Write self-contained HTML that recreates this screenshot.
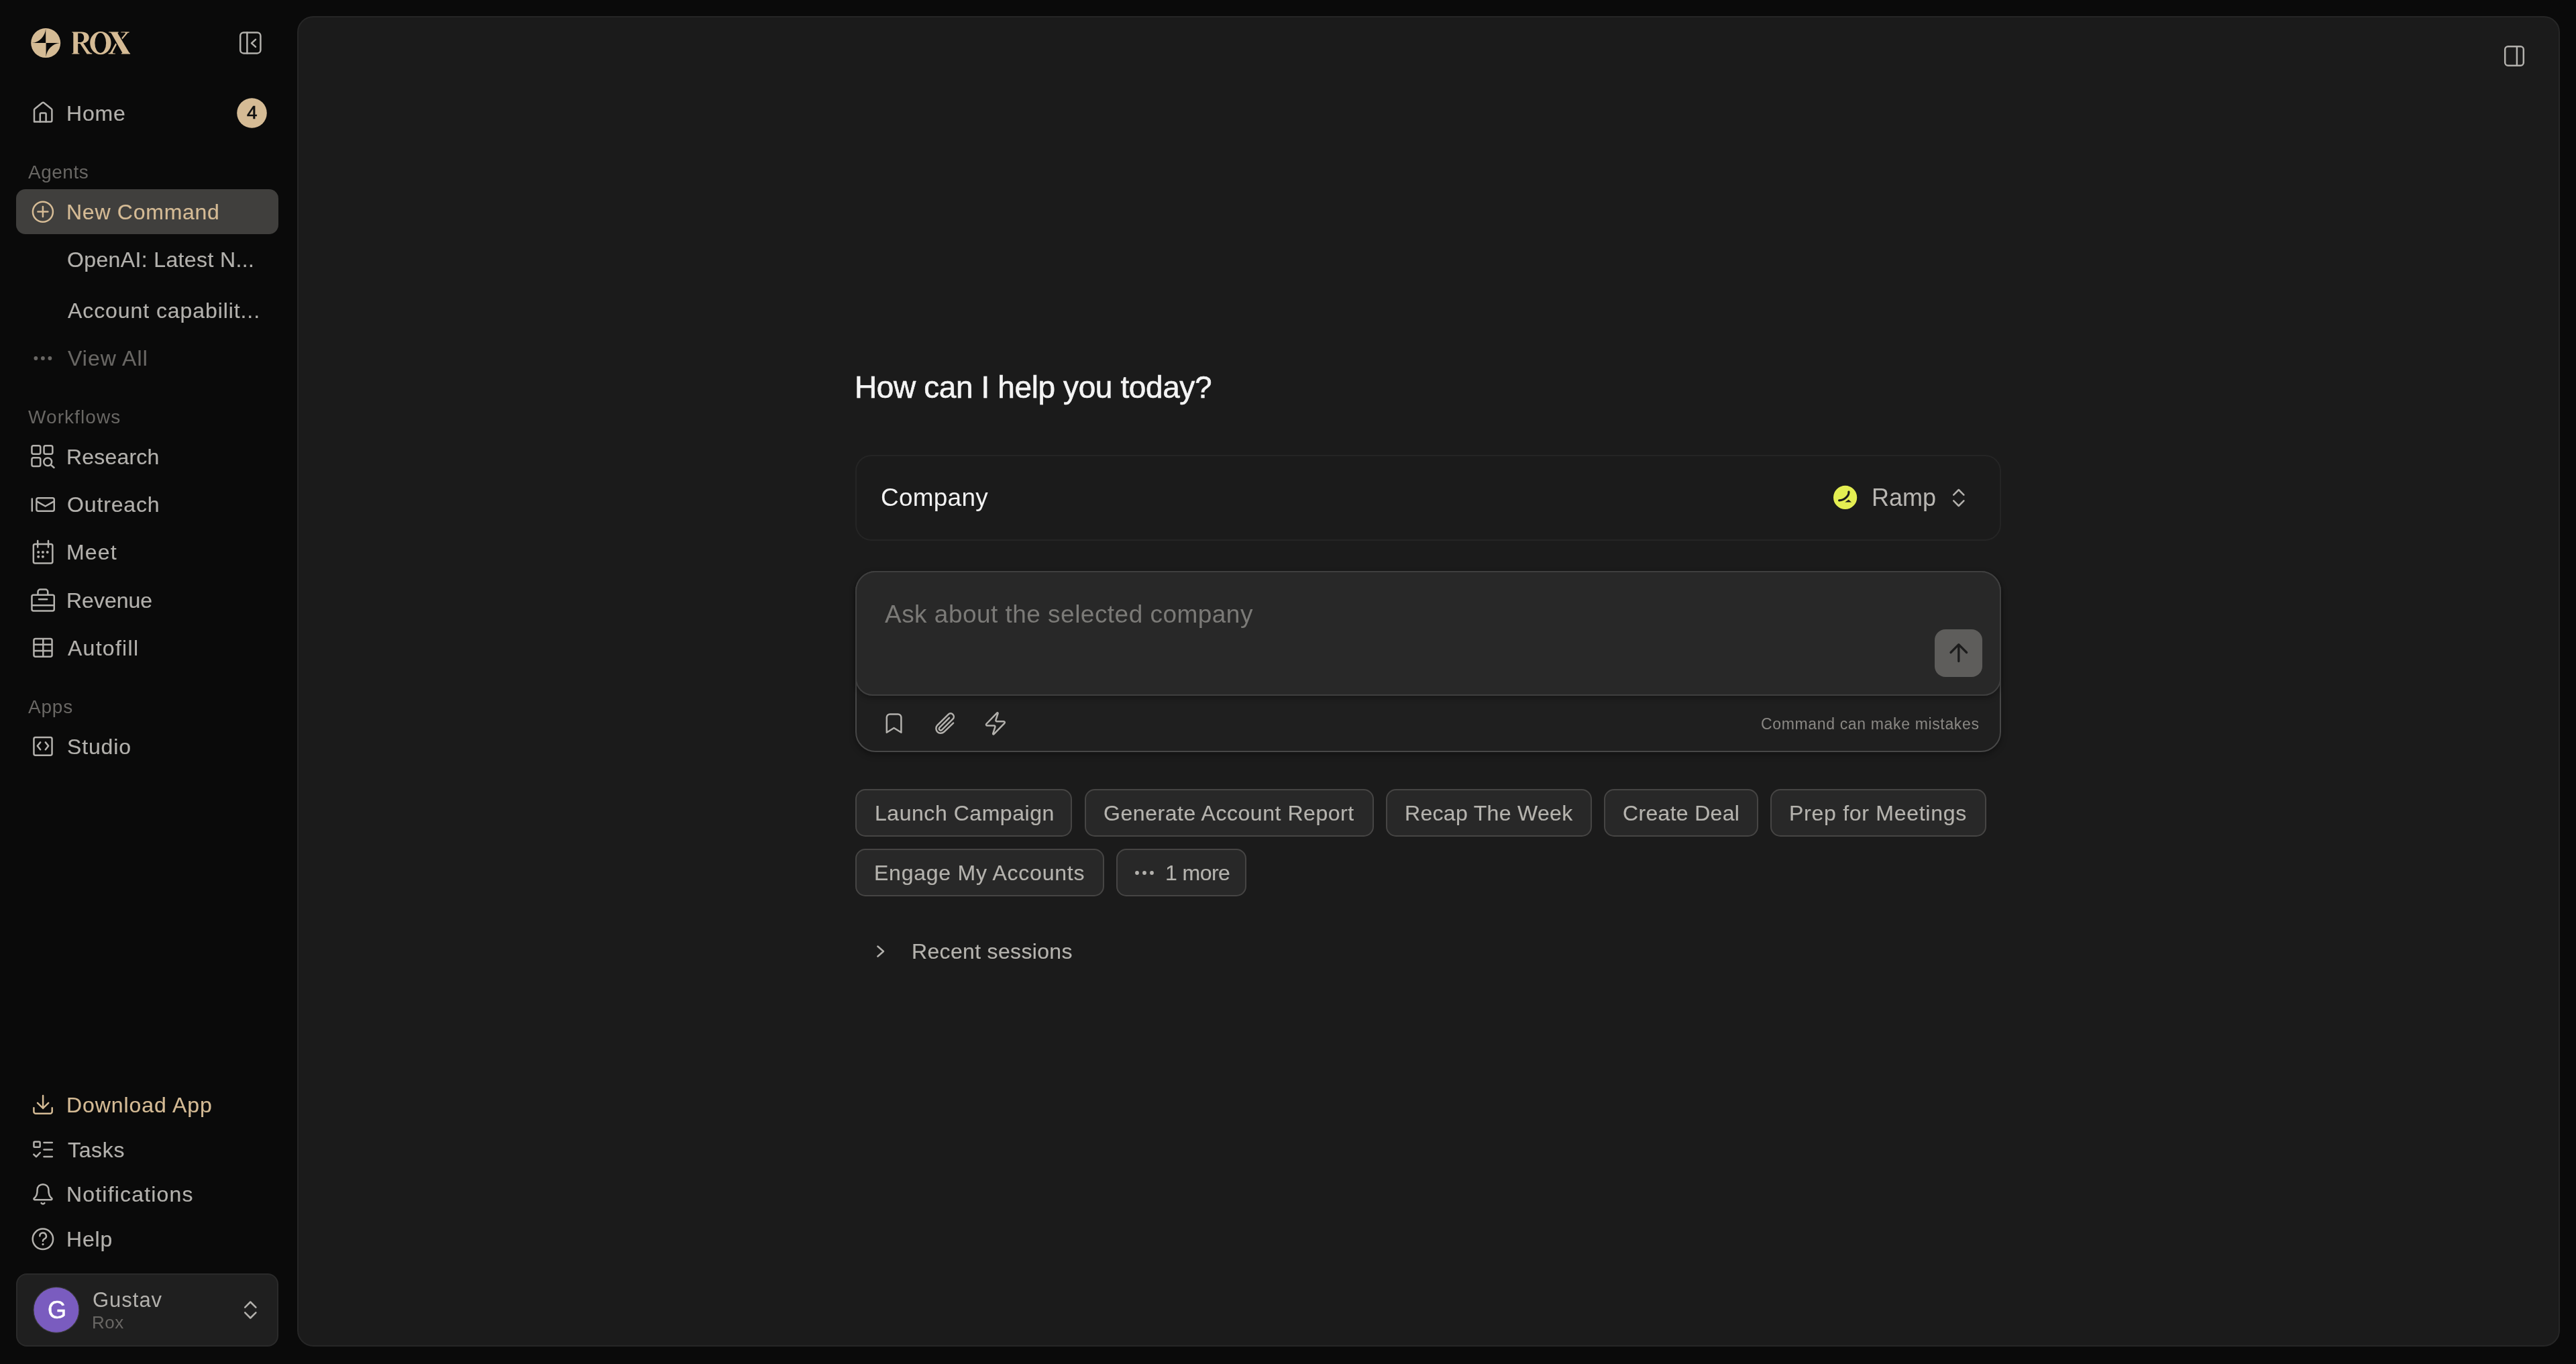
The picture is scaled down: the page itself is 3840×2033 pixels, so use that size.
<!DOCTYPE html>
<html><head><meta charset="utf-8">
<style>
html,body{margin:0;padding:0;}
body{width:3840px;height:2033px;overflow:hidden;background:#0a0a0a;position:relative;font-family:"Liberation Sans",sans-serif;}
.t{position:absolute;line-height:1;white-space:nowrap;font-family:"Liberation Sans",sans-serif;will-change:transform;}
.s{font-size:32px;color:#b3b1ad;-webkit-text-stroke:0.15px currentColor;}
.h{font-size:28px;color:#696764;}
.tan{color:#d5bb95;}
.box{position:absolute;box-sizing:border-box;}
svg{position:absolute;overflow:visible;}
.chip{border-radius:15px;background:#282828;border:2px solid #464544;}
.c{font-size:32px;color:#b5b3ae;-webkit-text-stroke:0.15px currentColor;}
</style></head>
<body>
<!-- SIDEBAR -->
<div class="box" style="left:24px;top:282px;width:391px;height:67px;border-radius:14px;background:#403f3d;"></div>
<div class="box" style="left:24px;top:1898px;width:391px;height:109px;border-radius:16px;background:#1f1f1f;border:2px solid #2a2a2a;"></div>

<svg style="left:0;top:0" width="440" height="2033" viewBox="0 0 440 2033">
  <!-- logo -->
  <circle cx="68.2" cy="64.1" r="22" fill="#d5bb95"/>
  <path d="M68.2 42.6 L68.2 64.1 L47.6 64.1 A23 23 0 0 0 68.2 42.6 Z" fill="#0a0a0a"/>
  <path d="M68.6 64.1 L89.2 64.1 A23 23 0 0 0 68.6 85 Z" fill="#0a0a0a"/>
  <g fill="none" stroke="#b3b1ad" stroke-width="2.5" stroke-linecap="round" stroke-linejoin="round">
    <!-- collapse -->
    <rect x="358.2" y="48.4" width="30.2" height="31" rx="5"/>
    <line x1="368.4" y1="48.4" x2="368.4" y2="79.4"/>
    <path d="M381 58.8 L375 64.3 L381 69.8"/>
    <!-- home -->
    <path d="M51 181.6 V163.8 a2 2 0 0 1 0.8-1.6 L62.9 153.3 a2 2 0 0 1 2.6 0 L76.6 162.2 a2 2 0 0 1 0.8 1.6 V179.6 a2 2 0 0 1-2 2 H53 a2 2 0 0 1-2-2z"/>
    <path d="M59.8 181.6 V170 a1.5 1.5 0 0 1 1.5-1.5 h5.8 a1.5 1.5 0 0 1 1.5 1.5 V181.6"/>
    <!-- research -->
    <rect x="47.45" y="664.15" width="12.8" height="12.7" rx="2.5"/>
    <rect x="65.55" y="664.15" width="12.8" height="12.7" rx="2.5"/>
    <rect x="47.45" y="682.25" width="12.8" height="12.7" rx="2.5"/>
    <circle cx="71.2" cy="688.4" r="5.9"/>
    <path d="M75.6 692.8 L80.5 697"/>
    <!-- outreach -->
    <rect x="54.45" y="742.25" width="26.3" height="19.5" rx="2.5"/>
    <path d="M55.8 747.8 L67.6 754.5 L79.4 747.8"/>
    <path d="M47.8 743.5 V761.5"/>
    <!-- calendar -->
    <rect x="49.85" y="811.05" width="28.5" height="28.5" rx="2.5"/>
    <path d="M56.2 806 V815.5 M72 806 V815.5"/>
    <!-- briefcase -->
    <rect x="47.45" y="886.85" width="33.3" height="23.7" rx="2.5"/>
    <path d="M56.5 886.5 V882.2 a3.6 3.6 0 0 1 3.6-3.6 h7.6 a3.6 3.6 0 0 1 3.6 3.6 V886.5"/>
    <path d="M58 893.2 H70.2 M48 902.2 H80"/>
    <!-- table -->
    <rect x="50.45" y="952.05" width="27.1" height="26.8" rx="2.5"/>
    <path d="M51 960.8 H77 M51 970 H77 M64.3 952.5 V978.5"/>
    <!-- studio -->
    <rect x="50.45" y="1099.05" width="27.1" height="26.8" rx="2.5"/>
    <path d="M60.2 1106.4 L55.8 1111.8 L60.2 1117.2 M67.8 1106.4 L72.2 1111.8 L67.8 1117.2"/>
    <!-- tasks -->
    <rect x="50.45" y="1701.85" width="9.2" height="8" rx="1.2"/>
    <path d="M65.5 1702.9 H77.8 M65.5 1713.4 H77.8 M65.5 1723.9 H77.8"/>
    <path d="M50.3 1720.6 L54 1724.2 L59.8 1718"/>
    <!-- bell -->
    <path d="M55.6 1773.8 C55.6 1768.4 59.4 1765.2 64 1765.2 C68.6 1765.2 72.4 1768.4 72.4 1773.8 C72.4 1778.6 73.2 1781.6 75 1783.8 L77.2 1786.2 a1.2 1.2 0 0 1-0.9 2 H51.7 a1.2 1.2 0 0 1-0.9-2 L53 1783.8 C54.8 1781.6 55.6 1778.6 55.6 1773.8 Z"/>
    <path d="M61.6 1793.2 Q64 1795.8 66.4 1793.2"/>
    <!-- help -->
    <circle cx="63.9" cy="1846.8" r="15.2"/>
    <path d="M59.3 1842.3 a4.8 4.8 0 1 1 6.8 4.3 c-1.4 0.7-2.2 1.6-2.2 3.1"/>
    <!-- user chevrons -->
    <path d="M365.2 1948.6 L373.3 1940.5 L381.4 1948.6 M365.2 1956.4 L373.3 1964.5 L381.4 1956.4"/>
  </g>
  <circle cx="64" cy="1854.6" r="1.6" fill="#b3b1ad"/>
  <g fill="#b3b1ad">
    <circle cx="57.2" cy="823.1" r="2"/><circle cx="63.9" cy="823.1" r="2"/><circle cx="70.7" cy="823.1" r="2"/>
    <circle cx="57.2" cy="829.8" r="2"/><circle cx="63.9" cy="829.8" r="2"/>
  </g>
  <!-- plus circle (tan) -->
  <g fill="none" stroke="#d5bb95" stroke-width="2.5" stroke-linecap="round">
    <circle cx="63.9" cy="315.7" r="15"/>
    <path d="M56.4 315.6 H71.4 M63.9 308.1 V323.1"/>
    <!-- download -->
    <path d="M64.1 1633 V1651.5 M56 1643.8 L64.1 1651.8 L72.2 1643.8"/>
    <path d="M50.4 1651.2 V1656.8 a3 3 0 0 0 3 3 H74.7 a3 3 0 0 0 3-3 V1651.2"/>
  </g>
  <g fill="#696764">
    <circle cx="53.4" cy="534" r="2.9"/><circle cx="63.9" cy="534" r="2.9"/><circle cx="74.4" cy="534" r="2.9"/>
  </g>
  <!-- badge -->
  <circle cx="375.5" cy="168.5" r="22.3" fill="#d5bb95"/>
  <!-- avatar -->
  <circle cx="83.9" cy="1952.4" r="34" fill="#7a5cbf" stroke="#3a3a3a" stroke-width="1.2"/>
</svg>
<svg style="left:0;top:0" width="440" height="100" viewBox="0 0 440 100">
  <g fill="#d5bb95" fill-rule="evenodd">
    <path d="M107.3 47.6 H121.5 C129.2 47.6 132.7 51.6 132.7 55.9 C132.7 60.4 129.3 63.6 124.2 64.3 L132.2 76.3 C133.6 78.4 135 79.3 137.3 79.4 V80.4 H129.6 L119.4 64.9 H116.2 V77.9 C116.2 79 116.9 79.4 118.4 79.4 V80.4 H107.2 V79.4 C108.7 79.4 109.3 79 109.3 77.9 V50.2 C109.3 49.1 108.7 48.6 107.3 48.6 Z M116.2 49.6 V63.1 H119.3 C123.1 63.1 125.2 60.4 125.2 56.3 C125.2 52.3 123.1 49.6 119.3 49.6 Z"/>
    <path d="M149.9 47 A15.7 17.1 0 1 1 149.9 81.2 A15.7 17.1 0 1 1 149.9 47 Z M149.75 49.1 A8.4 14.9 0 1 0 149.75 78.9 A8.4 14.9 0 1 0 149.75 49.1 Z"/>
    <path d="M162.1 47.6 H176.6 V48.6 C175.6 48.7 175.2 49.2 175.8 50.2 L192 77.6 C192.8 78.9 193.4 79.3 194.1 79.4 V80.4 H180.8 V79.4 C182.2 79.3 182.6 78.9 182 77.9 L166.4 50.4 C165.6 49.1 164.6 48.6 162.1 48.6 Z"/>
    <path d="M180.4 47.6 H192.7 V48.6 C191.2 48.7 190.2 49.3 189.2 50.5 L182.5 58.6 L181.2 56.7 L186.6 50.2 C187.3 49.2 187 48.7 185.6 48.6 H180.4 Z"/>
    <path d="M173.9 66.5 L168.3 77.2 C167.6 78.7 168.1 79.3 169.6 79.4 H171.9 V80.4 H161.5 V79.4 C162.9 79.3 164 78.7 165.1 77.3 L172.4 64.2 Z"/>
  </g>
</svg>

<div class="t" style="left:368px;top:154px;font-size:28px;color:#111;-webkit-text-stroke:0.6px #111;">4</div>

<div class="t s" style="left:99px;top:153px;letter-spacing:0.83px;">Home</div>
<div class="t h" style="left:42px;top:243px;letter-spacing:0.50px;">Agents</div>
<div class="t s tan" style="left:99px;top:300px;letter-spacing:0.74px;">New Command</div>
<div class="t s" style="left:100px;top:371px;letter-spacing:0.37px;">OpenAI: Latest N...</div>
<div class="t s" style="left:101px;top:447px;letter-spacing:0.92px;">Account capabilit...</div>
<div class="t s" style="left:101px;top:518px;color:#696764;letter-spacing:1.04px;">View All</div>
<div class="t h" style="left:42px;top:608px;letter-spacing:1.07px;">Workflows</div>
<div class="t s" style="left:99px;top:665px;letter-spacing:0.20px;">Research</div>
<div class="t s" style="left:100px;top:736px;letter-spacing:0.86px;">Outreach</div>
<div class="t s" style="left:99px;top:807px;letter-spacing:1.13px;">Meet</div>
<div class="t s" style="left:99px;top:879px;">Revenue</div>
<div class="t s" style="left:101px;top:950px;letter-spacing:1.28px;">Autofill</div>
<div class="t h" style="left:42px;top:1040px;letter-spacing:0.77px;">Apps</div>
<div class="t s" style="left:99.5px;top:1097px;letter-spacing:0.84px;">Studio</div>
<div class="t s tan" style="left:99px;top:1631px;letter-spacing:0.94px;">Download App</div>
<div class="t s" style="left:101px;top:1698px;letter-spacing:0.65px;">Tasks</div>
<div class="t s" style="left:99px;top:1764px;letter-spacing:1.18px;">Notifications</div>
<div class="t s" style="left:99px;top:1831px;letter-spacing:0.83px;">Help</div>
<div class="t" style="left:71px;top:1935px;font-size:36px;color:#fff;-webkit-text-stroke:0.5px #fff;">G</div>
<div class="t" style="left:138px;top:1922px;font-size:31px;color:#b3b1ad;letter-spacing:0.98px;">Gustav</div>
<div class="t" style="left:137px;top:1958px;font-size:26px;color:#696764;letter-spacing:0.45px;">Rox</div>

<!-- MAIN -->
<div class="box" id="panel" style="left:443px;top:24px;width:3373px;height:1983px;border-radius:24px;background:#1b1b1b;border:2px solid #262626;"></div>


<svg style="left:0;top:0" width="3840" height="2033" viewBox="0 0 3840 2033">
  <g fill="none" stroke="#b3b1ad" stroke-width="2.5" stroke-linecap="round" stroke-linejoin="round">
    <!-- right panel toggle -->
    <rect x="3734.2" y="69.2" width="27.6" height="28.6" rx="4.5"/>
    <line x1="3751.9" y1="69.2" x2="3751.9" y2="97.8"/>
  </g>
</svg>

<div class="t" style="left:1274px;top:554px;font-size:46px;color:#f4f4f4;-webkit-text-stroke:0.6px #f4f4f4;letter-spacing:-0.40px;">How can I help you today?</div>

<div class="box" style="left:1275px;top:678px;width:1708px;height:128px;border-radius:24px;border:2px solid #252525;"></div>
<div class="t" style="left:1313px;top:723px;font-size:37px;color:#f2f2f2;letter-spacing:0.23px;">Company</div>
<svg style="left:0;top:0" width="3840" height="2033" viewBox="0 0 3840 2033">
  <circle cx="2750.6" cy="741.4" r="17.6" fill="#e4ee52"/>
  <path d="M2755.9 733.2 C2756.5 738.5 2750 745.5 2741.6 745.8" fill="none" stroke="#1b1b1b" stroke-width="3.2" stroke-linecap="round"/>
  <path d="M2750.2 748.6 L2755.7 744.8 L2760 748.6 Z" fill="#1b1b1b"/>
  <path d="M2912.2 737.6 L2919.8 730 L2927.4 737.6 M2912.2 746.4 L2919.8 754 L2927.4 746.4" fill="none" stroke="#b3b1ad" stroke-width="2.5" stroke-linecap="round" stroke-linejoin="round"/>
</svg>
<div class="t" style="left:2790px;top:724px;font-size:36px;color:#b8b6b2;letter-spacing:0.00px;">Ramp</div>

<!-- input -->
<div class="box" style="left:1275px;top:851px;width:1708px;height:270px;border-radius:30px;background:#1f1f1f;border:2px solid #474747;box-shadow:0 4px 10px rgba(0,0,0,0.35);"></div>
<div class="box" style="left:1275px;top:851px;width:1708px;height:186px;border-radius:30px 30px 26px 26px;background:#282828;border:2px solid #3f3f3f;box-shadow:0 4px 8px rgba(0,0,0,0.3);"></div>
<div class="t" style="left:1319px;top:897px;font-size:37px;color:#7b7a77;letter-spacing:0.47px;">Ask about the selected company</div>
<div class="box" style="left:2884px;top:938px;width:71px;height:71px;border-radius:16px;background:#5e5d5b;"></div>
<svg style="left:0;top:0" width="3840" height="2033" viewBox="0 0 3840 2033">
  <path d="M2919.8 961 V985.5 M2908 972.5 L2919.8 960.7 L2931.6 972.5" fill="none" stroke="#1c1c1c" stroke-width="3.3" stroke-linecap="round" stroke-linejoin="round"/>
  <g fill="none" stroke="#b3b1ad" stroke-width="2.5" stroke-linecap="round" stroke-linejoin="round">
    <path d="M1321.8 1091.8 V1069.2 a4.8 4.8 0 0 1 4.8-4.8 H1338.6 a4.8 4.8 0 0 1 4.8 4.8 V1091.8 L1332.6 1085 Z"/>
    <path d="M1421.8 1077.6 L1405.6 1093.0 a8 8 0 0 1-11.3-11.3 L1413.2 1062.8 a5.5 5.5 0 0 1 7.8 7.8 L1402.2 1089.4 a2.8 2.8 0 0 1-4-4 L1414.8 1068.6" transform="translate(1408.5 1077.9) scale(0.87) translate(-1407.3 -1077.9)" vector-effect="non-scaling-stroke"/>
    <path d="M1471.6 1081.6 a1.6 1.6 0 0 1-1.25-2.6 L1486.2 1062.6 a0.8 0.8 0 0 1 1.38 0.74 L1484.5 1073.0 A1.6 1.6 0 0 0 1486 1075.2 H1496.2 a1.6 1.6 0 0 1 1.25 2.6 L1481.6 1094.2 a0.8 0.8 0 0 1-1.38-0.74 L1483.3 1083.8 A1.6 1.6 0 0 0 1481.8 1081.6 Z"/>
  </g>
</svg>
<div class="t" style="left:2625px;top:1068px;font-size:23px;color:#8a8884;letter-spacing:0.65px;">Command can make mistakes</div>

<!-- chips -->
<div class="box chip" style="left:1275px;top:1176px;width:323px;height:71px;"></div>
<div class="box chip" style="left:1617px;top:1176px;width:431px;height:71px;"></div>
<div class="box chip" style="left:2066px;top:1176px;width:307px;height:71px;"></div>
<div class="box chip" style="left:2391px;top:1176px;width:230px;height:71px;"></div>
<div class="box chip" style="left:2639px;top:1176px;width:322px;height:71px;"></div>
<div class="box chip" style="left:1275px;top:1265px;width:371px;height:71px;"></div>
<div class="box chip" style="left:1664px;top:1265px;width:194px;height:71px;"></div>
<div class="t c" style="left:1304px;top:1196px;letter-spacing:0.54px;">Launch Campaign</div>
<div class="t c" style="left:1645px;top:1196px;letter-spacing:0.55px;">Generate Account Report</div>
<div class="t c" style="left:2093.5px;top:1196px;letter-spacing:0.32px;">Recap The Week</div>
<div class="t c" style="left:2419px;top:1196px;letter-spacing:0.32px;">Create Deal</div>
<div class="t c" style="left:2667px;top:1196px;letter-spacing:0.73px;">Prep for Meetings</div>
<div class="t c" style="left:1303px;top:1285px;letter-spacing:0.75px;">Engage My Accounts</div>
<div class="t c" style="left:1736.5px;top:1285px;letter-spacing:-0.54px;">1 more</div>
<svg style="left:0;top:0" width="3840" height="2033" viewBox="0 0 3840 2033">
  <g fill="#b3b1ad"><circle cx="1695" cy="1301" r="2.9"/><circle cx="1706" cy="1301" r="2.9"/><circle cx="1717" cy="1301" r="2.9"/></g>
  <path d="M1308.4 1410.5 L1317 1418 L1308.4 1425.5" fill="none" stroke="#b3b1ad" stroke-width="2.5" stroke-linecap="round" stroke-linejoin="round"/>
</svg>
<div class="t c" style="left:1359px;top:1402px;letter-spacing:0.33px;">Recent sessions</div>

</body></html>
